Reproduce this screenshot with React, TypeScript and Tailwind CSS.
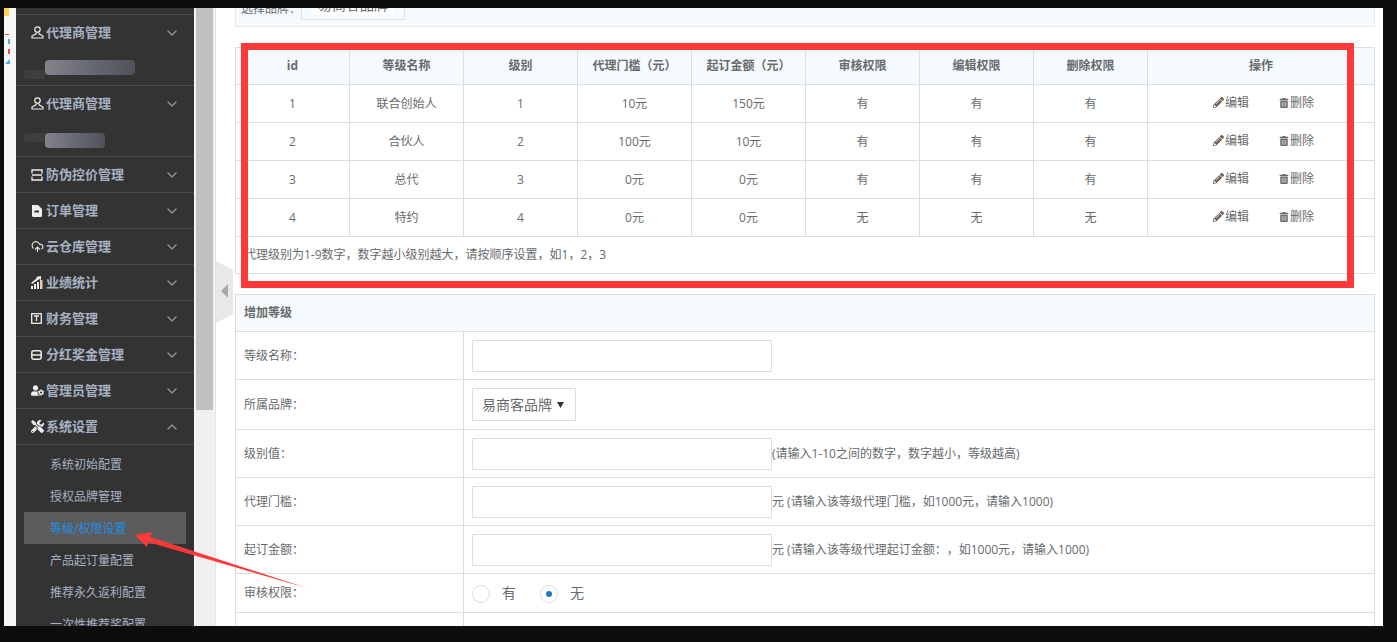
import { ReactNode } from "react"
import { FaPencilAlt, FaTrashAlt, FaTools, FaUserCog } from "react-icons/fa"
import { LuChevronDown, LuChevronUp, LuCloudUpload } from "react-icons/lu"

const UserIcon = () => (
  <svg width="13" height="13" viewBox="0 0 13 13" fill="none" stroke="#eee" strokeWidth="1.2">
    <circle cx="6.5" cy="3.6" r="2.7" />
    <path d="M5 6.5v1.4L1 10v2h11v-2L8 7.900V6.500" />
  </svg>
)
const ScanIcon = () => (
  <svg width="12" height="12" viewBox="0 0 12 12" fill="none" stroke="#eee" strokeWidth="1.3">
    <path d="M1 4.500V1h10v3.500M1 7.500V11h10V7.500M1 6h10" />
  </svg>
)
const FileIcon = () => (
  <svg width="11" height="12" viewBox="0 0 11 12" fill="#eee">
    <path d="M1 0h6l4 4v6.500Q11 12 9.500 12h-7Q1 12 1 10.500z" />
    <path d="M3.500 5.500h4.500v2H3.500z" fill="#333" />
  </svg>
)
const ChartIcon = () => (
  <svg width="12" height="13" viewBox="0 0 12 13" fill="#eee">
    <path d="M0 10h2v3H0zM3 8h2v5H3zM6 6h2v7H6z" />
    <path d="M9 4h2.500v9H9z" fill="#e9c9b0" />
    <path d="M0 7l6-5-1-1 5-1v4l-1.500-1L1 8z" />
  </svg>
)
const BoxIcon = () => (
  <svg width="11" height="11" viewBox="0 0 11 11" fill="none" stroke="#eee" strokeWidth="1.3">
    <rect x="0.700" y="0.700" width="9.600" height="9.600" />
    <path d="M3 3h5M5.500 3v5" />
  </svg>
)
const DiskIcon = () => (
  <svg width="11" height="10" viewBox="0 0 11 10" fill="none" stroke="#eee" strokeWidth="1.500">
    <rect x="0.800" y="0.800" width="9.400" height="8.400" rx="2" />
    <path d="M1 5h9" />
  </svg>
)
const Blob = ({ width, top, smudge }: { width: number; top: number; smudge: number }) => (
  <div className="relative h-[35px]">
    <div
      className="absolute left-[29px] h-[15px] rounded-sm bg-gradient-to-r from-[#86828a] via-[#666a72] to-[#505257] blur-[0.5px]"
      style={{ width, top }}
    />
    <div className="absolute left-[7px] h-[9px] w-[22px] rounded-l-full bg-[#3d3f3f]" style={{ top: smudge }} />
  </div>
)

const menus: { icon: ReactNode; label: string; open?: boolean }[] = [
  { icon: <ScanIcon />, label: "防伪控价管理" },
  { icon: <FileIcon />, label: "订单管理" },
  { icon: <LuCloudUpload size={13} color="#eee" />, label: "云仓库管理" },
  { icon: <ChartIcon />, label: "业绩统计" },
  { icon: <BoxIcon />, label: "财务管理" },
  { icon: <DiskIcon />, label: "分红奖金管理" },
  { icon: <FaUserCog size={13} color="#eee" />, label: "管理员管理" },
  { icon: <FaTools size={13} color="#eee" />, label: "系统设置", open: true },
]
const subMenus = ["系统初始配置", "授权品牌管理", "等级/权限设置", "产品起订量配置", "推荐永久返利配置", "一次性推荐奖配置"]

const levels = [
  ["1", "联合创始人", "1", "10元", "150元", "有", "有", "有"],
  ["2", "合伙人", "2", "100元", "10元", "有", "有", "有"],
  ["3", "总代", "3", "0元", "0元", "有", "有", "有"],
  ["4", "特约", "4", "0元", "0元", "无", "无", "无"],
]
const heads = ["id", "等级名称", "级别", "代理门槛（元）", "起订金额（元）", "审核权限", "编辑权限", "删除权限", "操作"]

function MenuHead({ icon, label, open }: { icon: ReactNode; label: string; open?: boolean }) {
  return (
    <div className="flex h-[35px] items-center pl-[15px] pr-[14px] text-[13px] font-bold text-[#a7b1c2]">
      <span className="flex w-[15px] justify-start">{icon}</span>
      <span className="flex-1">{label}</span>
      {open ? <LuChevronUp size={16} color="#8f9499" /> : <LuChevronDown size={16} color="#8f9499" />}
    </div>
  )
}

function Radios() {
  return (
    <div className="flex items-center pt-[1px] text-[14px]">
      <span className="h-[18px] w-[18px] rounded-full border border-[#ddd]" />
      <span className="mb-[2px] ml-[12px]">有</span>
      <span className="ml-[24px] flex h-[18px] w-[18px] items-center justify-center rounded-full border border-[#ddd]">
        <span className="h-[6px] w-[6px] rounded-full bg-[#1a7bb9]" />
      </span>
      <span className="mb-[2px] ml-[12px]">无</span>
    </div>
  )
}

function FormRow({ label, height, children }: { label: string; height: string; children: ReactNode }) {
  return (
    <tr className={height}>
      <td className="border border-[#ddd] pl-[8px]">{label}</td>
      <td className="border border-[#ddd] pl-[8px]">
        <div className="flex items-center">{children}</div>
      </td>
    </tr>
  )
}

const Input = () => <div className="h-[32px] w-[300px] border border-[#ddd] bg-white" />

export default function App() {
  return (
    <div className="relative h-[642px] w-[1397px] overflow-hidden bg-[#0d0d0d] pb-[16px] pl-[4px] pr-[14px] pt-[8px] font-['Open_Sans','Noto_Sans_CJK_SC',sans-serif] text-[12px] text-[#676a6c] [text-spacing-trim:space-all]">
      <div className="flex h-[618px] overflow-hidden bg-white">
        {/* left edge */}
        <div className="relative w-[12px] shrink-0 bg-[#f5f7f6]">
          <div className="h-[8px] w-[5px] bg-[#ffd34d]" />
          <svg width="5" height="32" viewBox="0 0 5 32" className="absolute left-[1px] top-[26px]">
            <path d="M0 0h4v1H0z" fill="#f04a3a" />
            <path d="M3 5h2v5H3z" fill="#55a6e8" />
            <path d="M3 15h2v5H3z" fill="#f04a3a" />
            <path d="M0 30l5-5v5z" fill="#55a6e8" />
          </svg>
        </div>

        {/* sidebar */}
        <div className="w-[178px] shrink-0 overflow-hidden bg-[#333]">
          <div className="h-[7px] border-b border-[#4a4a4a]" />
          <div className="h-[71px] border-b border-[#4a4a4a]">
            <MenuHead icon={<UserIcon />} label="代理商管理" />
            <Blob width={90} top={10} smudge={20} />
          </div>
          <div className="h-[71px] border-b border-[#4a4a4a]">
            <MenuHead icon={<UserIcon />} label="代理商管理" />
            <Blob width={60} top={12} smudge={12} />
          </div>
          {menus.map((m) => (
            <div key={m.label} className="border-b border-[#4a4a4a]">
              <MenuHead icon={m.icon} label={m.label} open={m.open} />
            </div>
          ))}
          <div className="pl-[8px] pr-[8px] pt-[3px] text-[12px] text-[#a7b1c2]">
            {subMenus.map((s) => (
              <div
                key={s}
                className={`flex h-[32px] items-center pl-[26px] pt-[1px] ${s === "等级/权限设置" ? "bg-[#5c5c5c] text-[#1c8fe8]" : ""}`}
              >
                {s}
              </div>
            ))}
          </div>
        </div>

        {/* page scrollbar */}
        <div className="w-[2px] shrink-0 bg-[#f5f5f5]" />
        <div className="flex w-[20px] shrink-0 border-r border-[#e4e4e4] bg-[#f0f0f0]">
          <div className="h-[402px] w-[17px] bg-[#c1c1c1]" />
        </div>

        {/* content */}
        <div className="w-[1158px] shrink-0 pl-[19px] pr-[8px]">
          <div className="flex h-[19px] w-[1140px] items-end overflow-hidden border border-t-0 border-[#e7eaec] bg-[#f5faff] pl-[5px]">
            <span className="relative top-[-8px]">选择品牌：</span>
            <div className="relative top-[-6px] flex h-[28px] w-[104px] items-center justify-center border border-[#dfe1e5] text-[14px]">
              <span className="relative top-[-1px] bg-white px-[6px] leading-[20px]">易商客品牌</span>
            </div>
          </div>

          <table className="mt-[20px] w-[1140px] table-fixed border-collapse text-center">
            <colgroup>
              {heads.slice(0, 8).map((h) => (
                <col key={h} className="w-[114px]" />
              ))}
              <col />
            </colgroup>
            <thead>
              <tr className="h-[37px] bg-[#f5faff]">
                {heads.map((h) => (
                  <th key={h} className="border border-[#ddd] font-bold">
                    {h}
                  </th>
                ))}
              </tr>
            </thead>
            <tbody>
              {levels.map((row) => (
                <tr key={row[0]} className="h-[38px]">
                  {row.map((c, i) => (
                    <td key={i} className="border border-[#ddd]">
                      {c}
                    </td>
                  ))}
                  <td className="border border-[#ddd]">
                    <div className="flex justify-center gap-[30px] pb-[2px] pl-[5px]">
                      <span className="flex items-center gap-[1px]">
                        <FaPencilAlt size={11} color="#6f5f58" />
                        编辑
                      </span>
                      <span className="flex items-center gap-[1px]">
                        <FaTrashAlt size={10} color="#6a6a6a" />
                        删除
                      </span>
                    </div>
                  </td>
                </tr>
              ))}
              <tr className="h-[37px]">
                <td colSpan={9} className="border border-[#ddd] pl-[8px] text-left">
                  代理级别为1-9数字，数字越小级别越大，请按顺序设置，如1，2，3
                </td>
              </tr>
            </tbody>
          </table>

          <table className="mt-[20px] w-[1140px] table-fixed border-collapse">
            <colgroup>
              <col className="w-[228px]" />
              <col />
            </colgroup>
            <tbody>
              <tr className="h-[37px] bg-[#f5faff]">
                <td colSpan={2} className="border border-[#ddd] pl-[8px] font-bold">
                  增加等级
                </td>
              </tr>
              <FormRow label="等级名称：" height="h-[48px]">
                <Input />
              </FormRow>
              <FormRow label="所属品牌：" height="h-[50px]">
                <div className="flex h-[33px] w-[104px] items-center border border-[#ddd] pl-[9px] text-[14px]">
                  易商客品牌
                  <svg width="7" height="6" viewBox="0 0 7 6" className="ml-[5px]">
                    <path d="M0 0h7L3.500 6z" fill="#333" />
                  </svg>
                </div>
              </FormRow>
              <FormRow label="级别值：" height="h-[48px]">
                <Input />
                (请输入1-10之间的数字，数字越小，等级越高)
              </FormRow>
              <FormRow label="代理门槛：" height="h-[48px]">
                <Input />
                元 (请输入该等级代理门槛，如1000元，请输入1000)
              </FormRow>
              <FormRow label="起订金额：" height="h-[48px]">
                <Input />
                元 (请输入该等级代理起订金额：，如1000元，请输入1000)
              </FormRow>
              <FormRow label="审核权限：" height="h-[39px]">
                <Radios />
              </FormRow>
              <FormRow label="编辑权限：" height="h-[44px]">
                <Radios />
              </FormRow>
            </tbody>
          </table>
        </div>
      </div>

      {/* collapse handle */}
      <svg width="18" height="62" viewBox="0 0 18 62" className="absolute left-[216px] top-[261px]">
        <path d="M0 0l17 9v44L0 62z" fill="#e8e8e8" />
        <path d="M5 30l7-7v14z" fill="#a9a9a9" />
      </svg>

      {/* screenshot annotations */}
      <div className="pointer-events-none absolute left-[241px] top-[43px] h-[245px] w-[1113px] border-[7px] border-[#ff3838]" />
      <svg width="1397" height="642" className="pointer-events-none absolute left-0 top-0">
        <polygon points="135,535 152,532 150,537 307,588 148,542 147,547" fill="#ff3838" />
      </svg>
    </div>
  )
}
